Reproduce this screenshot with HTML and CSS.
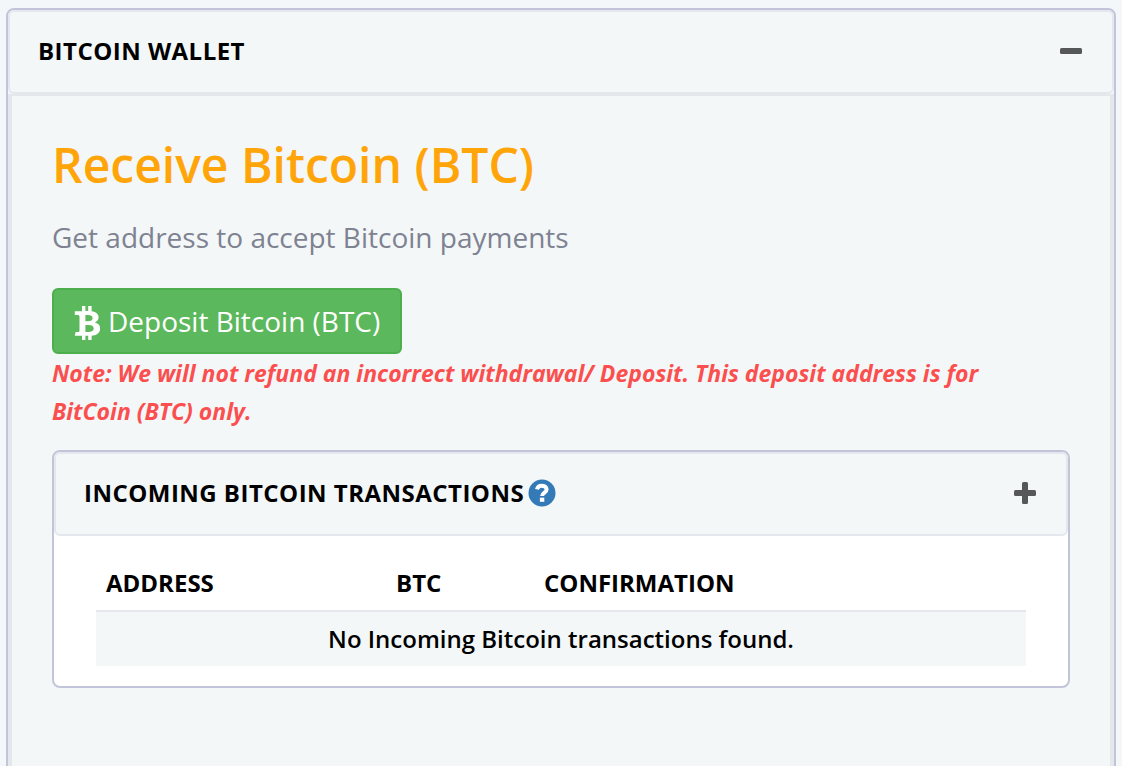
FILE: index.html
```
<!DOCTYPE html>
<html lang="en">
<head>
  <meta charset="UTF-8" />
  <meta name="viewport" content="width=device-width, initial-scale=1" />
  <title>Bitcoin Wallet</title>
  <link rel="stylesheet" href="styles.css">
</head>
<body>

  <section class="panel wallet">
    <header class="panel-heading">
      <h2 class="panel-title">Bitcoin Wallet</h2>
      <button type="button" class="panel-toggle" aria-label="Collapse">
        <svg width="24" height="24" viewBox="0 0 24 24"><rect x="1" y="9" width="22" height="6" rx="1.500" fill="currentColor"/></svg>
      </button>
    </header>

    <div class="panel-body wallet-body">
      <h1>Receive Bitcoin (BTC)</h1>
      <p class="lead">Get address to accept Bitcoin payments</p>

      <button type="button" class="btn-deposit">
        <svg class="btc-icon" width="26" height="40" viewBox="0 0 26 40" fill="currentColor">
          <path d="M8 5h3.400v5h2.800V5h3.400v5.300c4.400.7 7 2.800 7 6 0 2.500-1.400 4.200-3.700 5.200 3.300.8 5.300 2.900 5.300 6 0 4.100-3.200 6.700-8.600 7.200V39h-3.400v-4.200h-2.800V39H8v-4.200H0.800l.8-3.900H4c1 0 1.500-.5 1.500-1.500V15.600c0-1.100-.6-1.700-1.700-1.700H0.800V10.200H8zM11.400 14v6.300h2.300c3.200 0 4.900-1.100 4.900-3.200S16.900 14 13.700 14zM11.400 24v6.900h2.800c3.600 0 5.500-1.200 5.500-3.500s-1.900-3.400-5.500-3.400z" fill-rule="evenodd"/>
        </svg>
        <span>Deposit Bitcoin (BTC)</span>
      </button>
      <p class="note">Note: We will not refund an incorrect withdrawal/ Deposit. This deposit address is for BitCoin (BTC) only.</p>

      <section class="panel transactions">
        <header class="panel-heading">
          <h2 class="panel-title">Incoming Bitcoin Transactions
            <a href="#" class="help" aria-label="Help">
              <svg width="28" height="28" viewBox="0 0 28 28">
                <circle cx="14" cy="14" r="13.500" fill="#337ab7"/>
                <path d="M9 10.400C9.600 7.700 11.500 6.700 13.700 6.700c2.800 0 4.900 1.400 4.900 3.700 0 3.300-4.500 3-4.500 6.700" fill="none" stroke="#fff" stroke-width="4"/>
                <rect x="11.900" y="18.600" width="4.400" height="4.200" fill="#fff"/>
              </svg>
            </a>
          </h2>
          <button type="button" class="panel-toggle" aria-label="Expand">
            <svg width="24" height="24" viewBox="0 0 24 24" fill="currentColor"><rect x="1" y="9" width="22" height="6" rx="1.500"/><rect x="9" y="1" width="6" height="22" rx="1.500"/></svg>
          </button>
        </header>

        <div class="panel-body">
          <table>
            <thead>
              <tr>
                <th class="col-address">Address</th>
                <th class="col-btc">BTC</th>
                <th>Confirmation</th>
              </tr>
            </thead>
            <tbody>
              <tr>
                <td colspan="3">No Incoming Bitcoin transactions found.</td>
              </tr>
            </tbody>
          </table>
        </div>
      </section>
    </div>
  </section>

</body>
</html>
```
FILE: styles.css
```
* {
  box-sizing: border-box;
}

body {
  margin: 0;
  padding: 8px 6px 0;
  background: #f3f7f9;
  color: #000;
  font-family: "Open Sans", sans-serif;
}

h1, h2, p {
  margin: 0;
}

button {
  font-family: inherit;
  cursor: pointer;
}

.panel {
  border: 2px solid #c2c5d9;
  border-radius: 8px;
}

.panel-heading {
  display: flex;
  justify-content: space-between;
  align-items: center;
  height: 84px;
  padding: 0 29px 2px 28px;
  border: 2px solid #e4e8ee;
  border-radius: 6px;
  background: #f3f7f8;
}

.panel-title {
  display: flex;
  align-items: center;
  gap: 4px;
  font-size: 24px;
  font-weight: 700;
  letter-spacing: 0.02em;
  line-height: 32px;
  text-transform: uppercase;
}

.panel-toggle {
  display: flex;
  padding: 0;
  border: none;
  background: none;
  color: #555857;
}

.help {
  display: flex;
}

.wallet {
  min-height: calc(100vh + 20px);
  display: flex;
  flex-direction: column;
}

.wallet-body {
  flex: 1;
  padding: 36px 40px;
  border: solid #e4e8ea;
  border-width: 2px 4px;
  background: #f3f7f8;
}

h1 {
  color: #ffa50a;
  font-size: 48px;
  font-weight: 600;
  line-height: 66px;
}

.lead {
  margin: 19px 0 31px;
  color: #7e8291;
  font-size: 28px;
  line-height: 40px;
}

.btn-deposit {
  display: inline-flex;
  align-items: center;
  gap: 8px;
  height: 66px;
  padding: 0 20px;
  border: 2px solid #4cae4c;
  border-radius: 6px;
  background: #5cb85c;
  color: #fff;
  font-size: 28px;
}

.note {
  padding-right: 40px;
  color: #fb4f4f;
  font-size: 23px;
  font-style: italic;
  font-weight: 700;
  line-height: 38px;
}

.transactions {
  margin-top: 20px;
  background: #fff;
}

.transactions .panel-body {
  padding: 20px 42px;
}

table {
  width: 100%;
  border-collapse: collapse;
  font-size: 24px;
}

th, td {
  padding: 10px;
  line-height: 34px;
}

th {
  text-align: left;
  text-transform: uppercase;
}

.col-address {
  width: 290px;
}

.col-btc {
  width: 148px;
}

td {
  border-top: 2px solid #e4e8ee;
  background: #f3f7f8;
  font-weight: 600;
  text-align: center;
}
```
